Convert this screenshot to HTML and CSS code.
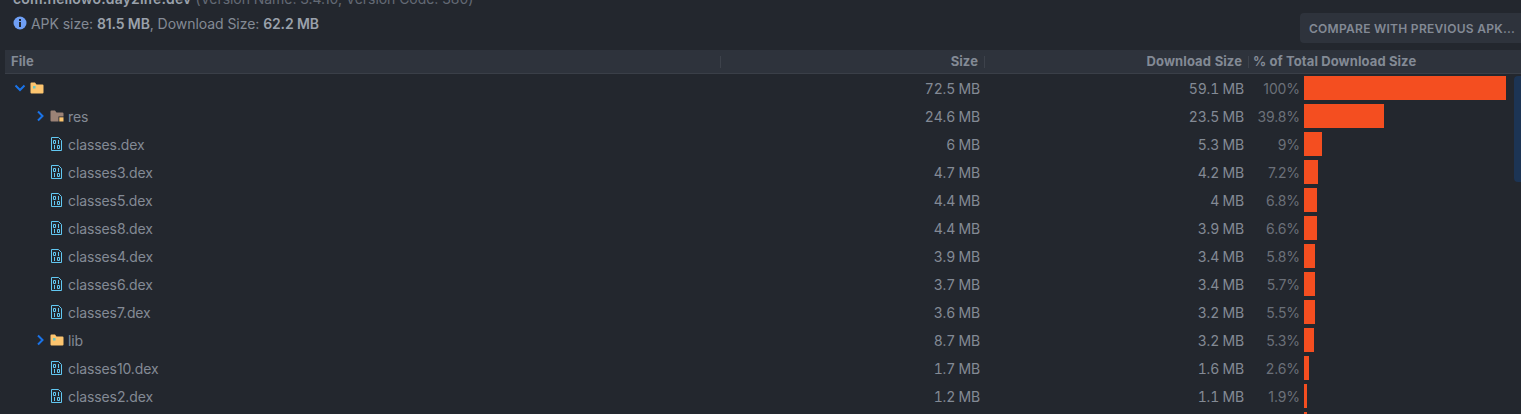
FILE: index.html
```html
<!DOCTYPE html>
<html lang="en">
<head>
<meta charset="utf-8">
<title>APK Analyzer</title>
<link rel="stylesheet" href="styles.css">
</head>
<body>
<svg class="defs" width="0" height="0" aria-hidden="true">
  <symbol id="chev-r" viewBox="0 0 10 12"><path d="M3 1.500 7.500 6 3 10.500" fill="none" stroke="#1a73e8" stroke-width="2"/></symbol>
  <symbol id="chev-d" viewBox="0 0 12 10"><path d="M1.500 2.500 6 7l4.500-4.500" fill="none" stroke="#1a73e8" stroke-width="2"/></symbol>
  <symbol id="folder" viewBox="0 0 14 12"><path d="M.5 1.500a1 1 0 0 1 1-1h3.500l1.500 2h6a1 1 0 0 1 1 1v7a1 1 0 0 1-1 1h-11a1 1 0 0 1-1-1z" fill="#fdc56f"/><rect x="3" y="4" width="2.500" height="2.500" fill="#6cc7c0"/></symbol>
  <symbol id="res" viewBox="0 0 14 12"><path d="M.5 1.500a1 1 0 0 1 1-1h3.500l1.500 2h6a1 1 0 0 1 1 1v7a1 1 0 0 1-1 1h-11a1 1 0 0 1-1-1z" fill="#9b8276"/><rect x="8.500" y="6.500" width="5.500" height="5.500" fill="#23272e"/><rect x="9.300" y="7.300" width="4.200" height="4.200" fill="#fdc56f"/></symbol>
  <symbol id="dex" viewBox="0 0 11 14"><path d="M.5 .5h7l3 3v10H.5z" fill="none" stroke="#62c8f2"/><path d="M2.500 3.500h2v3h-2zM7.500 3v4M3.500 8v4M6.500 8.500h2v3h-2z" fill="none" stroke="#62c8f2"/></symbol>
</svg>

<header class="top">
  <div class="summary">
    <p class="title"><strong>com.hellowo.day2life.dev</strong> (Version Name: 3.4.10, Version Code: 380)</p>
    <p class="sizes">
      <svg class="info" viewBox="0 0 14 14"><circle cx="7" cy="7" r="6.500" fill="#6f9ff5"/><rect x="6" y="6" width="2" height="5" fill="#23272e"/><rect x="6" y="3" width="2" height="2" fill="#23272e"/></svg>
      <span>APK size: <strong>81.5 MB</strong>, Download Size: <strong>62.2 MB</strong></span>
    </p>
  </div>
  <button class="compare">Compare with previous APK...</button>
</header>

<main class="table">
  <div class="row head">
    <div class="cell name sep">File</div>
    <div class="cell num sep">Size</div>
    <div class="cell num sep">Download Size</div>
    <div class="cell pct-head">% of Total Download Size</div>
  </div>

  <div class="row">
    <div class="cell name lvl0"><svg class="chev chev-open"><use href="#chev-d"/></svg><svg class="ic"><use href="#folder"/></svg></div>
    <div class="cell num">72.5 MB</div><div class="cell num">59.1 MB</div>
    <div class="cell usage"><span class="pct">100%</span><i class="bar" style="width:202px"></i></div>
  </div>
  <div class="row">
    <div class="cell name lvl1"><svg class="chev"><use href="#chev-r"/></svg><svg class="ic"><use href="#res"/></svg><span>res</span></div>
    <div class="cell num">24.6 MB</div><div class="cell num">23.5 MB</div>
    <div class="cell usage"><span class="pct">39.8%</span><i class="bar" style="width:80px"></i></div>
  </div>
  <div class="row">
    <div class="cell name lvl2"><svg class="ic ic-file"><use href="#dex"/></svg><span>classes.dex</span></div>
    <div class="cell num">6 MB</div><div class="cell num">5.3 MB</div>
    <div class="cell usage"><span class="pct">9%</span><i class="bar" style="width:18px"></i></div>
  </div>
  <div class="row">
    <div class="cell name lvl2"><svg class="ic ic-file"><use href="#dex"/></svg><span>classes3.dex</span></div>
    <div class="cell num">4.7 MB</div><div class="cell num">4.2 MB</div>
    <div class="cell usage"><span class="pct">7.2%</span><i class="bar" style="width:14px"></i></div>
  </div>
  <div class="row">
    <div class="cell name lvl2"><svg class="ic ic-file"><use href="#dex"/></svg><span>classes5.dex</span></div>
    <div class="cell num">4.4 MB</div><div class="cell num">4 MB</div>
    <div class="cell usage"><span class="pct">6.8%</span><i class="bar" style="width:13px"></i></div>
  </div>
  <div class="row">
    <div class="cell name lvl2"><svg class="ic ic-file"><use href="#dex"/></svg><span>classes8.dex</span></div>
    <div class="cell num">4.4 MB</div><div class="cell num">3.9 MB</div>
    <div class="cell usage"><span class="pct">6.6%</span><i class="bar" style="width:13px"></i></div>
  </div>
  <div class="row">
    <div class="cell name lvl2"><svg class="ic ic-file"><use href="#dex"/></svg><span>classes4.dex</span></div>
    <div class="cell num">3.9 MB</div><div class="cell num">3.4 MB</div>
    <div class="cell usage"><span class="pct">5.8%</span><i class="bar" style="width:11px"></i></div>
  </div>
  <div class="row">
    <div class="cell name lvl2"><svg class="ic ic-file"><use href="#dex"/></svg><span>classes6.dex</span></div>
    <div class="cell num">3.7 MB</div><div class="cell num">3.4 MB</div>
    <div class="cell usage"><span class="pct">5.7%</span><i class="bar" style="width:11px"></i></div>
  </div>
  <div class="row">
    <div class="cell name lvl2"><svg class="ic ic-file"><use href="#dex"/></svg><span>classes7.dex</span></div>
    <div class="cell num">3.6 MB</div><div class="cell num">3.2 MB</div>
    <div class="cell usage"><span class="pct">5.5%</span><i class="bar" style="width:11px"></i></div>
  </div>
  <div class="row">
    <div class="cell name lvl1"><svg class="chev"><use href="#chev-r"/></svg><svg class="ic"><use href="#folder"/></svg><span>lib</span></div>
    <div class="cell num">8.7 MB</div><div class="cell num">3.2 MB</div>
    <div class="cell usage"><span class="pct">5.3%</span><i class="bar" style="width:10px"></i></div>
  </div>
  <div class="row">
    <div class="cell name lvl2"><svg class="ic ic-file"><use href="#dex"/></svg><span>classes10.dex</span></div>
    <div class="cell num">1.7 MB</div><div class="cell num">1.6 MB</div>
    <div class="cell usage"><span class="pct">2.6%</span><i class="bar" style="width:5px"></i></div>
  </div>
  <div class="row">
    <div class="cell name lvl2"><svg class="ic ic-file"><use href="#dex"/></svg><span>classes2.dex</span></div>
    <div class="cell num">1.2 MB</div><div class="cell num">1.1 MB</div>
    <div class="cell usage"><span class="pct">1.9%</span><i class="bar" style="width:3px"></i></div>
  </div>
  <div class="row">
    <div class="cell name lvl2"></div><div class="cell num"></div><div class="cell num"></div>
    <div class="cell usage"><span class="pct"></span><i class="bar" style="width:3px"></i></div>
  </div>
  <div class="scrollthumb"></div>
</main>
</body>
</html>
```
FILE: styles.css
```css
* { box-sizing: border-box; }
html, body { margin: 0; height: 100%; }
body {
  overflow: hidden;
  background: #23272e;
  color: #838a95;
  font: 14px/1 Inter, "Noto Sans", sans-serif;
}
.defs { display: block; height: 0; }
p { margin: 0; }
strong { font-weight: 600; color: #9aa1ab; }

.top {
  display: flex;
  justify-content: space-between;
  align-items: flex-start;
  height: 58px;
  margin-top: -8px;
  padding-left: 13px;
}
.summary { display: flex; flex-direction: column; gap: 9px; }
.title { color: #636a75; white-space: nowrap; height: 14px; letter-spacing: -.05px; }
.title strong { letter-spacing: .17px; }
.sizes { display: flex; align-items: center; gap: 4px; height: 16px; letter-spacing: -.05px; }
.sizes span { padding-top: 2px; }
.sizes strong { letter-spacing: -.12px; }
.info { width: 14px; height: 14px; }
.compare {
  width: 240px;
  height: 30px;
  margin: 21px -19px 0 0;
  padding: 1px 0 0 9px;
  border: 0;
  border-radius: 4px;
  background: #2e333c;
  color: #838a95;
  font: 600 12px/29px Inter, sans-serif;
  letter-spacing: .28px;
  text-align: left;
  text-transform: uppercase;
  white-space: nowrap;
}

.table { position: relative; height: 364px; margin-left: 5px; overflow: hidden; }
.row {
  display: grid;
  grid-template-columns: 716px 264px 264px 1fr;
  height: 28px;
  align-items: center;
}
.head {
  height: 24px;
  background: #2e333c;
  border-bottom: 1px solid #3a3f48;
  font-size: 13px;
  font-weight: 700;
  letter-spacing: .1px;
  color: #838a95;
}
.cell { display: flex; align-items: center; height: 100%; min-width: 0; white-space: nowrap; }
.name { padding-left: 6px; }
.name span { padding-top: 2px; letter-spacing: -.1px; }
.num { justify-content: flex-end; padding: 2px 5px 0 0; font-variant-numeric: tabular-nums; letter-spacing: -.2px; }
.head .num { padding: 0 7px 0 0; letter-spacing: .1px; }
.sep { position: relative; }
.sep::after {
  content: "";
  position: absolute;
  right: 0;
  top: 6px;
  width: 1px;
  height: 12px;
  background: #3d424b;
}
.pct-head { padding-left: 4px; }

.lvl0 { padding-left: 9px; }
.lvl1 { padding-left: 30px; }
.lvl2 { padding-left: 45px; }
.chev { width: 10px; height: 12px; flex: none; margin-right: 5px; }
.chev-open { width: 12px; height: 10px; margin-right: 4px; }
.ic { width: 14px; height: 16px; flex: none; margin-right: 4px; }
.ic-file { width: 11px; height: 14px; margin: 0 6px 0 1px; }

.usage { gap: 4px; }
.pct { width: 51px; flex: none; padding-top: 2px; text-align: right; color: #6b7079; letter-spacing: -.1px; }
.bar { display: block; height: 24px; background: #f44e20; }

.scrollthumb {
  position: absolute;
  top: 26px;
  right: 0;
  width: 7px;
  height: 106px;
  border-radius: 4px 0 0 4px;
  background: #1c3454;
}
```
